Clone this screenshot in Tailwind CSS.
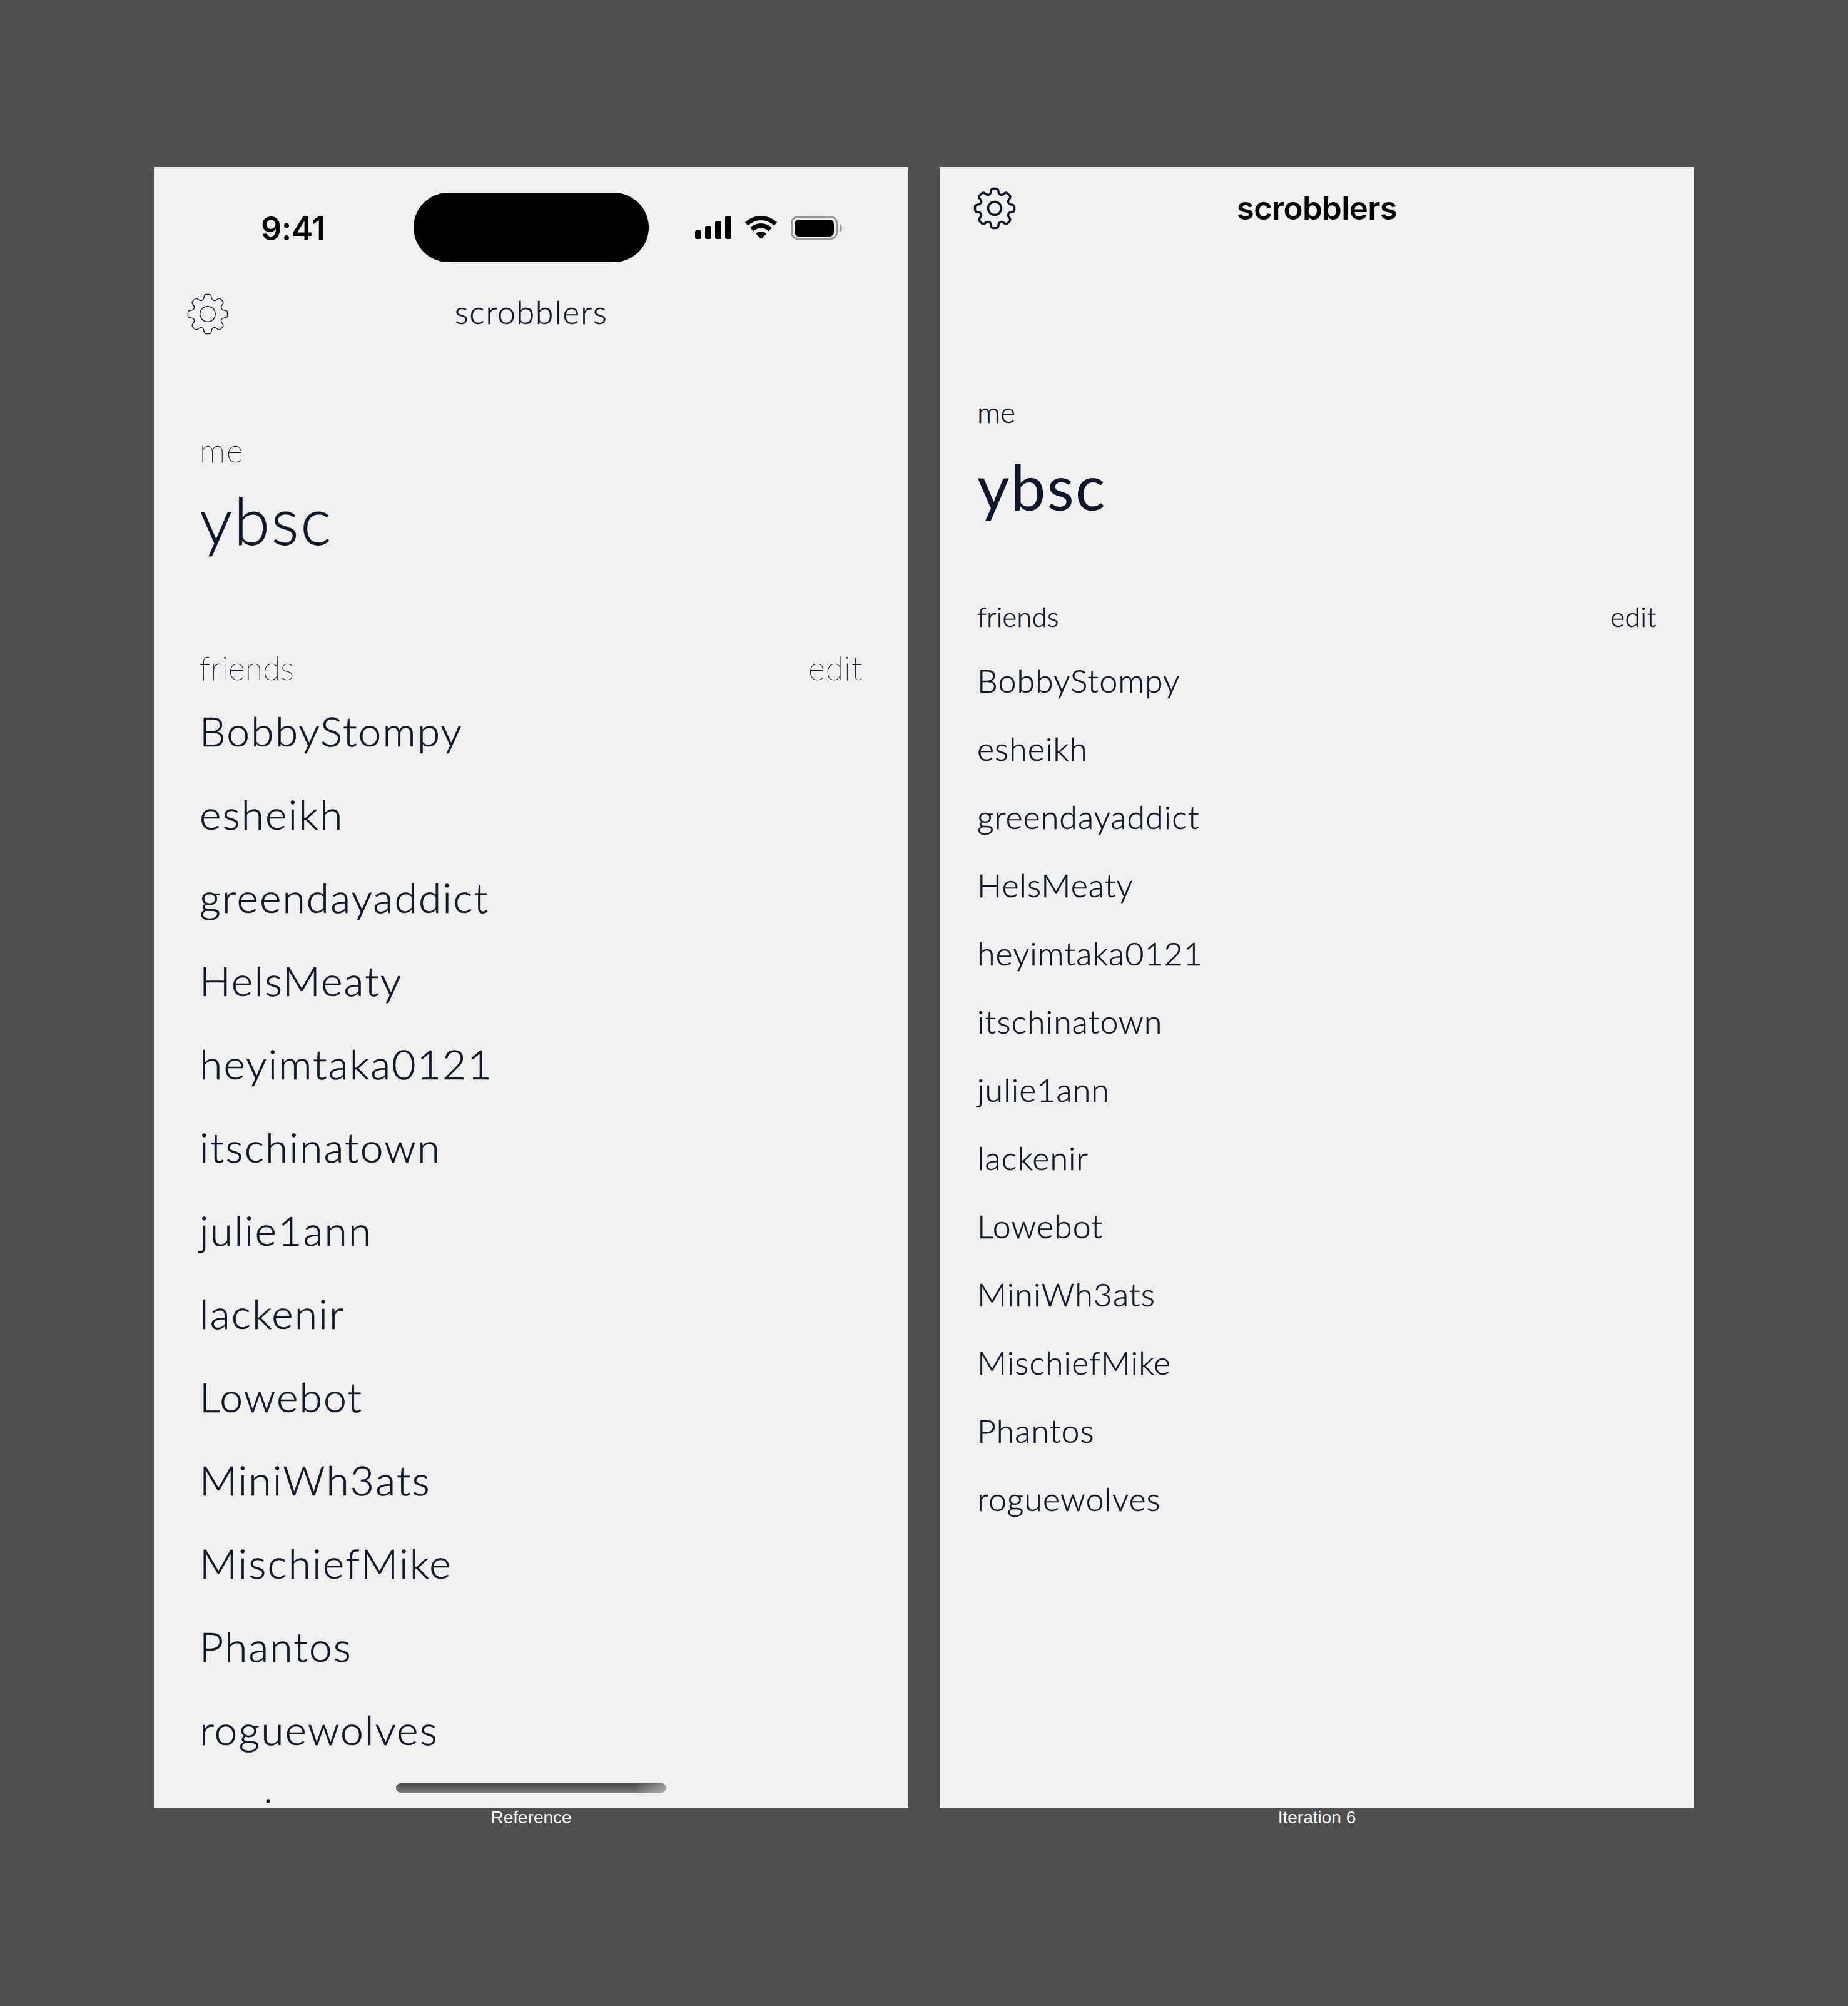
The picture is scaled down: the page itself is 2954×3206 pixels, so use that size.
<!doctype html>
<html lang="en">
<head>
<meta charset="utf-8">
<title>scrobblers</title>
<script src="https://cdn.jsdelivr.net/npm/@tailwindcss/browser@4"></script>
</head>
<body class="bg-[#4f4f4f]">
<div class="flex gap-[50px] pl-[246px] pt-[267px] w-[2954px] h-[3206px] font-['Lato',sans-serif] text-[#0f172a]">

  <!-- reference column -->
  <div class="w-[1206px]">
    <div class="relative w-[1206px] h-[2622px] bg-[#f0f0f0] overflow-hidden">
      <!-- status bar -->
      <div class="grid grid-cols-[415px_376px_1fr] items-center h-[193px]">
        <div class="pl-[171px] pt-[4px] font-['Inter',sans-serif] font-semibold text-[52px] tracking-[-0.5px] leading-[60px] text-black">9:41</div>
        <div class="h-[111px] rounded-full bg-black"></div>
        <div class="flex items-center gap-[22px] pl-[74px]">
          <svg width="58" height="37" viewBox="0 0 58 37" fill="#000">
            <rect x="0" y="23" width="10" height="14" rx="3"/>
            <rect x="16" y="16" width="10" height="21" rx="3"/>
            <rect x="32" y="8" width="10" height="29" rx="3"/>
            <rect x="48" y="0" width="10" height="37" rx="3"/>
          </svg>
          <svg width="51" height="37" viewBox="0 0 51 37" fill="#000" class="overflow-visible">
            <path d="M-.2 10.4A37 37 0 0 1 51.2 10.4L46.3 15.4A30 30 0 0 0 4.7 15.4Z"/>
            <path d="M8.2 19A25 25 0 0 1 42.8 19L37.6 24.4A17.5 17.5 0 0 0 13.4 24.4Z"/>
            <path d="M17.2 28.4A12 12 0 0 1 33.8 28.4L25.5 37Z"/>
          </svg>
          <svg width="82" height="38" viewBox="0 0 82 38">
            <rect x="1.5" y="1.5" width="72" height="35" rx="10" fill="none" stroke="#999" stroke-width="3"/>
            <rect x="6" y="6" width="63" height="27" rx="7" fill="#000"/>
            <path d="M78 13c2.500 1 4 3.500 4 6.500s-1.500 5.500-4 6.500Z" fill="#999"/>
          </svg>
        </div>
      </div>
      <!-- header -->
      <div class="grid grid-cols-[1fr_auto_1fr] items-center h-[84px] px-[44px]">
        <svg width="84" height="84" viewBox="0 0 24 24" fill="none" stroke="#0f172a" stroke-width=".4" stroke-linecap="round" stroke-linejoin="round">
          <path d="M10.343 3.94c.09-.542.56-.94 1.11-.94h1.093c.55 0 1.02.398 1.11.94l.149.894c.07.424.384.764.78.93.398.164.855.142 1.205-.108l.737-.527a1.125 1.125 0 011.45.12l.773.774c.39.389.44 1.002.12 1.45l-.527.737c-.25.35-.272.806-.107 1.204.165.397.505.71.93.78l.893.15c.543.09.94.56.94 1.109v1.094c0 .55-.397 1.02-.94 1.11l-.893.149c-.425.07-.765.383-.93.78-.165.398-.143.854.107 1.204l.527.738c.32.447.269 1.06-.12 1.45l-.774.773a1.125 1.125 0 01-1.449.12l-.738-.527c-.35-.25-.806-.272-1.203-.107-.397.165-.71.505-.781.929l-.149.894c-.09.542-.56.94-1.11.94h-1.094c-.55 0-1.019-.398-1.11-.94l-.148-.894c-.071-.424-.384-.764-.781-.93-.398-.164-.854-.142-1.204.108l-.738.527c-.447.32-1.06.269-1.45-.12l-.773-.774a1.125 1.125 0 01-.12-1.45l.527-.737c.25-.35.273-.806.108-1.204-.165-.397-.505-.71-.93-.78l-.894-.15c-.542-.09-.94-.56-.94-1.109v-1.094c0-.55.398-1.02.94-1.11l.894-.149c.424-.07.765-.383.93-.78.165-.398.143-.854-.107-1.204l-.527-.738a1.125 1.125 0 01.12-1.45l.773-.773a1.125 1.125 0 011.45-.12l.737.527c.35.25.807.272 1.204.107.397-.165.71-.505.78-.929l.15-.894z"/>
          <circle cx="12" cy="12" r="3.5"/>
        </svg>
        <div class="pb-[8px] text-[52px] tracking-[1.6px] leading-[60px] font-light [-webkit-text-stroke:0.5px_#0f172a]">scrobblers</div>
        <div></div>
      </div>
      <!-- content -->
      <div class="px-[73px]">
        <div class="mt-[145px] text-[52px] tracking-[2px] leading-[60px] font-thin [-webkit-text-stroke:0.4px_#0f172a]">me</div>
        <div class="mt-[22px] text-[104px] tracking-[2.5px] leading-[120px] font-light [-webkit-text-stroke:0.8px_#0f172a]">ybsc</div>
        <div class="mt-[146px] flex justify-between text-[52px] leading-[60px] font-thin [-webkit-text-stroke:0.4px_#0f172a]">
          <span>friends</span><span class="tracking-[1px]">edit</span>
        </div>
        <ul class="mt-[4px] text-[66px] tracking-[2.1px] font-light [-webkit-text-stroke:0.7px_#0f172a]">
          <li class="h-[133px] leading-[133px]">BobbyStompy</li>
          <li class="h-[133px] leading-[133px]">esheikh</li>
          <li class="h-[133px] leading-[133px]">greendayaddict</li>
          <li class="h-[133px] leading-[133px]">HelsMeaty</li>
          <li class="h-[133px] leading-[133px]">heyimtaka0121</li>
          <li class="h-[133px] leading-[133px]">itschinatown</li>
          <li class="h-[133px] leading-[133px]">julie1ann</li>
          <li class="h-[133px] leading-[133px]">lackenir</li>
          <li class="h-[133px] leading-[133px]">Lowebot</li>
          <li class="h-[133px] leading-[133px]">MiniWh3ats</li>
          <li class="h-[133px] leading-[133px]">MischiefMike</li>
          <li class="h-[133px] leading-[133px]">Phantos</li>
          <li class="h-[133px] leading-[133px]">roguewolves</li>
          <li class="h-[133px] leading-[133px]">sanie</li>
        </ul>
      </div>
      <!-- home indicator -->
      <div class="absolute left-[387px] top-[2583px] w-[432px] h-[15px] rounded-full bg-[linear-gradient(100deg,transparent_88%,rgba(240,240,240,0.45)),linear-gradient(to_bottom,#4e4e4e,#777777)]"></div>
    </div>
    <div class="mt-[1px] text-center font-['Liberation_Sans',sans-serif] text-[28px] leading-[30px] text-white">Reference</div>
  </div>

  <!-- iteration column -->
  <div class="w-[1206px]">
    <div class="w-[1206px] h-[2622px] bg-[#f0f0f0] overflow-hidden">
      <div class="grid grid-cols-[1fr_auto_1fr] items-center h-[131px] px-[46px]">
        <svg width="84" height="84" viewBox="0 0 24 24" fill="none" stroke="#0f172a" stroke-width="1" stroke-linecap="round" stroke-linejoin="round">
          <path d="M10.343 3.94c.09-.542.56-.94 1.11-.94h1.093c.55 0 1.02.398 1.11.94l.149.894c.07.424.384.764.78.93.398.164.855.142 1.205-.108l.737-.527a1.125 1.125 0 011.45.12l.773.774c.39.389.44 1.002.12 1.45l-.527.737c-.25.35-.272.806-.107 1.204.165.397.505.71.93.78l.893.15c.543.09.94.56.94 1.109v1.094c0 .55-.397 1.02-.94 1.11l-.893.149c-.425.07-.765.383-.93.78-.165.398-.143.854.107 1.204l.527.738c.32.447.269 1.06-.12 1.45l-.774.773a1.125 1.125 0 01-1.449.12l-.738-.527c-.35-.25-.806-.272-1.203-.107-.397.165-.71.505-.781.929l-.149.894c-.09.542-.56.94-1.11.94h-1.094c-.55 0-1.019-.398-1.11-.94l-.148-.894c-.071-.424-.384-.764-.781-.93-.398-.164-.854-.142-1.204.108l-.738.527c-.447.32-1.06.269-1.45-.12l-.773-.774a1.125 1.125 0 01-.12-1.45l.527-.737c.25-.35.273-.806.108-1.204-.165-.397-.505-.71-.93-.78l-.894-.15c-.542-.09-.94-.56-.94-1.109v-1.094c0-.55.398-1.02.94-1.11l.894-.149c.424-.07.765-.383.93-.78.165-.398.143-.854-.107-1.204l-.527-.738a1.125 1.125 0 01.12-1.45l.773-.773a1.125 1.125 0 011.45-.12l.737.527c.35.25.807.272 1.204.107.397-.165.71-.505.78-.929l.15-.894z"/>
          <circle cx="12" cy="12" r="3"/>
        </svg>
        <div class="font-['Inter',sans-serif] font-semibold text-[51px] tracking-[-0.7px] leading-[60px] text-black">scrobblers</div>
        <div></div>
      </div>
      <div class="px-[60px]">
        <div class="mt-[231px] text-[46px] leading-[60px] font-light [-webkit-text-stroke:0.5px_#0f172a]">me</div>
        <div class="mt-[28px] text-[100px] tracking-[2px] leading-[120px]">ybsc</div>
        <div class="mt-[118px] flex justify-between text-[44px] leading-[60px] font-light [-webkit-text-stroke:0.5px_#0f172a]">
          <span>friends</span><span class="tracking-[0.5px]">edit</span>
        </div>
        <ul class="mt-[18px] text-[52px] tracking-[1px] font-light [-webkit-text-stroke:0.6px_#0f172a]">
          <li class="h-[109px] leading-[109px]">BobbyStompy</li>
          <li class="h-[109px] leading-[109px]">esheikh</li>
          <li class="h-[109px] leading-[109px]">greendayaddict</li>
          <li class="h-[109px] leading-[109px]">HelsMeaty</li>
          <li class="h-[109px] leading-[109px]">heyimtaka0121</li>
          <li class="h-[109px] leading-[109px]">itschinatown</li>
          <li class="h-[109px] leading-[109px]">julie1ann</li>
          <li class="h-[109px] leading-[109px]">lackenir</li>
          <li class="h-[109px] leading-[109px]">Lowebot</li>
          <li class="h-[109px] leading-[109px]">MiniWh3ats</li>
          <li class="h-[109px] leading-[109px]">MischiefMike</li>
          <li class="h-[109px] leading-[109px]">Phantos</li>
          <li class="h-[109px] leading-[109px]">roguewolves</li>
        </ul>
      </div>
    </div>
    <div class="mt-[1px] text-center font-['Liberation_Sans',sans-serif] text-[28px] leading-[30px] text-white">Iteration 6</div>
  </div>

</div>
</body>
</html>
